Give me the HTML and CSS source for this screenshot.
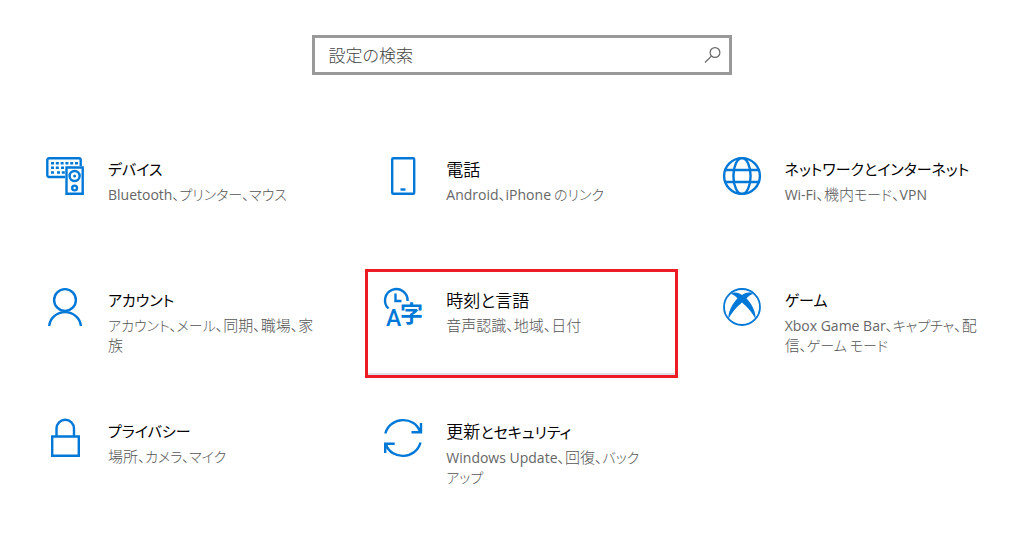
FILE: index.html
```html
<!DOCTYPE html>
<html lang="ja">
<head>
<meta charset="utf-8">
<meta name="viewport" content="width=device-width, initial-scale=1">
<title>設定</title>
<link rel="stylesheet" href="styles.css">
</head>
<body>
<main class="settings">
  <form class="search" role="search">
    <input class="search-input" type="text" placeholder="設定の検索" aria-label="設定の検索">
    <button class="search-button" type="button" aria-label="検索">
      <svg class="search-icon" viewBox="0 0 18 18"><circle cx="11" cy="6.5" r="4.9"/><path d="M7.4 10.1 1 16.5"/></svg>
    </button>
  </form>
  <nav class="tiles">
    <a class="tile" href="#devices">
      <svg class="icon" viewBox="0 0 38 38">
        <path d="M19 20H3a1.7 1.7 0 0 1-1.7-1.700V3A1.700 1.700 0 0 1 3 1.300h30A1.700 1.700 0 0 1 34.700 3v6"/>
        <path d="M5 6.200h27M5 10.700h8M15 10.700h3M5 15.500h3M11 15.500h8" stroke-dasharray="3 1.800"/>
        <path d="M20.500 10.500h16.200v26.200H20.500z"/>
        <circle cx="28.600" cy="19" r="5"/><circle class="fill" cx="28.600" cy="19" r="1.500"/>
        <circle cx="28.600" cy="31" r="2.400"/>
      </svg>
      <span class="text"><span class="title kana">デバイス</span><span class="desc"><span class="latin">Bluetooth</span>、プリンター、マウス</span></span>
    </a>
    <a class="tile" href="#phone">
      <svg class="icon" viewBox="0 0 38 38"><rect x="8.200" y="1.200" width="22" height="35.600" rx="1"/><path d="M16.500 32.500h5"/></svg>
      <span class="text"><span class="title">電話</span><span class="desc"><span class="latin">Android</span>、<span class="latin">iPhone</span> のリンク</span></span>
    </a>
    <a class="tile" href="#network">
      <svg class="icon" viewBox="0 0 38 38"><circle cx="19" cy="19" r="17.900"/><ellipse cx="19" cy="19" rx="8.600" ry="17.900"/><path d="M3 13h32M3 25h32"/></svg>
      <span class="text"><span class="title kana">ネットワークとインターネット</span><span class="desc"><span class="latin">Wi-Fi</span><span class="kanji">、機内</span>モード<span class="kanji">、</span><span class="latin">VPN</span></span></span>
    </a>
    <a class="tile" href="#accounts">
      <svg class="icon" viewBox="0 0 38 38"><circle cx="19" cy="12" r="10.900"/><path d="M3.200 38a15.900 15.100 0 0 1 31.700 0"/></svg>
      <span class="text"><span class="title kana">アカウント</span><span class="desc">アカウント、メール<span class="kanji">、同期、職場、家<br>族</span></span></span>
    </a>
    <a class="tile selected" href="#time-language">
      <svg class="icon" viewBox="0 0 38 38">
        <path d="M4.500 20.500A11.300 11.300 0 1 1 23.600 13M11.500 5.500V13h6"/>
        <text class="glyph letter" x="2" y="37.500" font-size="23">A</text>
        <text class="glyph" x="16" y="34" font-size="23">字</text>
      </svg>
      <span class="text"><span class="title">時刻と言語</span><span class="desc"><span class="kanji">音声認識、地域、日付</span></span></span>
    </a>
    <a class="tile" href="#gaming">
      <svg class="icon" viewBox="0 0 38 38">
        <circle class="thin" cx="19" cy="19" r="18"/>
        <path class="fill" d="M8 6C11 3.500 16 4.600 19 7c3-2.400 8-3.500 11-1-2 .3-4.500 2-6.500 4.200C28 15 33 23 32.600 31 30 25.500 24 18.700 19 14.500 14 18.700 8 25.500 5.400 31 5 23 10 15 14.500 10.200 12.500 8 10 6.300 8 6z"/>
      </svg>
      <span class="text"><span class="title kana">ゲーム</span><span class="desc"><span class="latin">Xbox Game Bar</span>、キャプチャ<span class="kanji">、配<br>信</span>、ゲーム モード</span></span>
    </a>
    <a class="tile" href="#privacy">
      <svg class="icon" viewBox="0 0 38 38"><path d="M6.200 17.500h26.600v19.300H6.200zM10.500 17V9.500a8.500 8.500 0 0 1 17.500 0V17"/></svg>
      <span class="text"><span class="title kana">プライバシー</span><span class="desc"><span class="kanji">場所</span>、カメラ、マイク</span></span>
    </a>
    <a class="tile" href="#update">
      <svg class="icon" viewBox="0 0 38 38"><path d="M1.300 14.500C6-2.500 30.500-3.500 36 12.500M37 4v9.200h-9.500M36.500 23.500C32 40.500 7.500 41.500 2 25.500M1.200 34v-9.200h9.500"/></svg>
      <span class="text"><span class="title">更新<span class="kana">とセキュリティ</span></span><span class="desc"><span class="latin">Windows Update</span><span class="kanji">、回復、</span>バック<br>アップ</span></span>
    </a>
  </nav>
</main>
</body>
</html>
```
FILE: styles.css
```css
* { box-sizing: border-box; }
body {
  margin: 0;
  background: #fff;
  color: #000;
  font-family: "Noto Sans CJK JP", sans-serif;
  font-feature-settings: "palt";
}
.settings { padding: 35px 3px 20px 27px; }
.search {
  display: flex;
  align-items: center;
  width: 420px;
  max-width: 100%;
  height: 40px;
  margin: 0 auto 63px;
  border: 3px solid #999;
}
.search-input {
  flex: 1;
  min-width: 0;
  padding: 0 14px;
  border: 0;
  outline: 0;
  background: none;
  font: 300 17px/24px "Noto Sans CJK JP", sans-serif;
  font-feature-settings: "palt";
}
.search-input::placeholder { color: #444; opacity: 1; }
.search-button {
  display: flex;
  padding: 0 7px;
  border: 0;
  background: none;
}
.search-icon { width: 18px; height: 18px; fill: none; stroke: #666; stroke-width: 1.2; }
.tiles {
  display: grid;
  grid-template-columns: repeat(3, minmax(0, 1fr));
  grid-auto-rows: minmax(109px, auto);
  gap: 22px 26px;
}
.tile {
  display: flex;
  align-items: flex-start;
  gap: 24px;
  padding: 19px 16px 8px 19px;
  color: inherit;
  text-decoration: none;
}
.selected {
  outline: 3px solid #ed1c24;
  outline-offset: -3px;
  box-shadow: inset 0 -5px 0 #dde2e6;
}
.icon {
  flex: none;
  width: 38px;
  height: 38px;
  overflow: visible;
  fill: none;
  stroke: #0078d7;
  stroke-width: 2.4;
}
.thin { stroke-width: 1.8; }
.fill { fill: #0078d7; stroke: none; }
.glyph { fill: #0078d7; stroke: none; font-family: Roboto, "Noto Sans CJK JP", sans-serif; font-weight: 700; }
.letter { font-weight: 500; }
.text { display: flex; flex-direction: column; gap: 3px; white-space: nowrap; }
.title { font-size: 17px; font-weight: 350; line-height: 24px; }
.kana { font-size: 15px; font-weight: 400; }
.desc { color: #555; font-size: 14px; font-weight: 300; line-height: 20px; }
.kanji { font-size: 15px; line-height: 1; }
.latin { color: #666; font-family: "Open Sans", sans-serif; font-weight: 400; line-height: 1; }
```
